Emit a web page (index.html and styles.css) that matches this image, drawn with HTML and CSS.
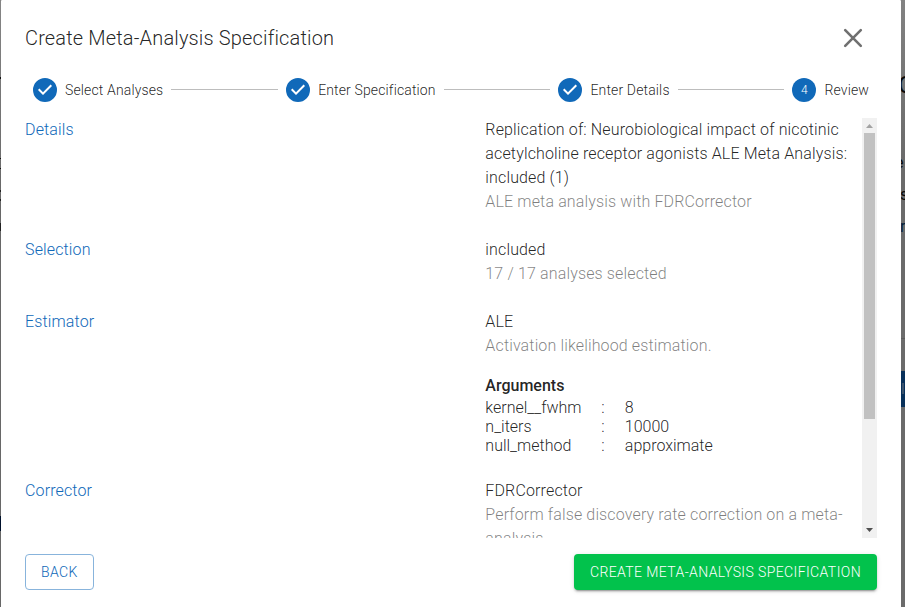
FILE: index.html
```
<!DOCTYPE html>
<html lang="en">
<head>
<meta charset="utf-8">
<title>Create Meta-Analysis Specification</title>
<link rel="stylesheet" href="styles.css">
</head>
<body>
<div class="backdrop" aria-hidden="true">
  <div class="edge-left"></div>
  <div class="edge-right">
    <span class="frag frag-title">C</span>
    <span class="frag frag-e">e</span>
    <span class="frag frag-s">s</span>
    <span class="frag frag-r">r</span>
    <i class="frag-rule"></i>
    <i class="frag-button"></i>
  </div>
</div>
<div class="dialog" role="dialog">
  <header class="dialog-header">
    <h2 class="title">Create Meta-Analysis Specification</h2>
    <svg class="close" viewBox="0 0 20 20"><path d="M2.2 2.2 17.8 17.8M17.8 2.2 2.2 17.8"/></svg>
  </header>
  <div class="stepper">
    <div class="step"><svg class="step-icon" viewBox="0 0 24 24"><path d="M12 0a12 12 0 1 0 0 24 12 12 0 0 0 0-24zm-2 17l-5-5 1.4-1.4 3.6 3.6 7.6-7.6L19 8l-9 9z"/></svg><span>Select Analyses</span></div>
    <div class="connector"></div>
    <div class="step"><svg class="step-icon" viewBox="0 0 24 24"><path d="M12 0a12 12 0 1 0 0 24 12 12 0 0 0 0-24zm-2 17l-5-5 1.4-1.4 3.6 3.6 7.6-7.6L19 8l-9 9z"/></svg><span>Enter Specification</span></div>
    <div class="connector"></div>
    <div class="step"><svg class="step-icon" viewBox="0 0 24 24"><path d="M12 0a12 12 0 1 0 0 24 12 12 0 0 0 0-24zm-2 17l-5-5 1.4-1.4 3.6 3.6 7.6-7.6L19 8l-9 9z"/></svg><span>Enter Details</span></div>
    <div class="connector"></div>
    <div class="step"><span class="step-number">4</span><span>Review</span></div>
  </div>
  <div class="review">
    <div class="review-content">
      <section class="row">
        <div class="label">Details</div>
        <div class="value">
          <p>Replication of: Neurobiological impact of nicotinic acetylcholine receptor agonists ALE Meta Analysis: included (1)</p>
          <p class="muted">ALE meta analysis with FDRCorrector</p>
        </div>
      </section>
      <section class="row">
        <div class="label">Selection</div>
        <div class="value">
          <p>included</p>
          <p class="muted">17 / 17 analyses selected</p>
        </div>
      </section>
      <section class="row">
        <div class="label">Estimator</div>
        <div class="value">
          <p>ALE</p>
          <p class="muted">Activation likelihood estimation.</p>
          <p class="args-title">Arguments</p>
          <div class="args">
            <span>kernel__fwhm</span><span>:</span><span>8</span>
            <span>n_iters</span><span>:</span><span>10000</span>
            <span>null_method</span><span>:</span><span>approximate</span>
          </div>
        </div>
      </section>
      <section class="row">
        <div class="label">Corrector</div>
        <div class="value">
          <p>FDRCorrector</p>
          <p class="muted">Perform false discovery rate correction on a meta-analysis.</p>
        </div>
      </section>
    </div>
    <div class="scrollbar">
      <svg class="arrow arrow-up" viewBox="0 0 15 15"><path d="M4 10 7.5 6 11 10z"/></svg>
      <div class="thumb"></div>
      <svg class="arrow arrow-down" viewBox="0 0 15 15"><path d="M4 5H11L7.5 9z"/></svg>
    </div>
  </div>
  <footer class="actions">
    <button class="btn btn-outlined">BACK</button>
    <button class="btn btn-primary">CREATE META-ANALYSIS SPECIFICATION</button>
  </footer>
</div>
</body>
</html>
```
FILE: styles.css
```
* { box-sizing: border-box; }

body {
  margin: 0;
  height: 607px;
  overflow: hidden;
  background: #707070;
  color: rgba(0, 0, 0, 0.87);
  font-family: Roboto, "Liberation Sans", sans-serif;
  font-size: 16px;
  font-weight: 300;
  line-height: 24px;
  letter-spacing: 0.0088em;
}

p, h2 { margin: 0; }

.backdrop {
  position: absolute;
  inset: 0;
  display: flex;
  justify-content: space-between;
  overflow: hidden;
}

.edge-left {
  width: 1px;
  background:
    linear-gradient(#00112c, #00112c) 0 516px / 1px 15px no-repeat,
    linear-gradient(#111, #111) 0 77px / 1px 2px no-repeat,
    linear-gradient(#111, #111) 0 158px / 1px 1px no-repeat,
    linear-gradient(#111, #111) 0 168px / 1px 1px no-repeat,
    linear-gradient(#222, #222) 0 190px / 1px 2px no-repeat,
    linear-gradient(#222, #222) 0 199px / 1px 2px no-repeat,
    linear-gradient(#222, #222) 0 223px / 1px 8px no-repeat,
    linear-gradient(#858585, #676767 200px);
}

.edge-right {
  position: relative;
  width: 4px;
  overflow: hidden;
  background: linear-gradient(#828282, #6b6b6b 160px);
}

.frag { position: absolute; left: 0; color: #080808; font-weight: 400; }
.frag-title { top: 73px; left: -3px; font-size: 24px; }
.frag-e { top: 151px; left: -6px; }
.frag-s { top: 183px; left: -1px; }
.frag-r { top: 215px; left: -1px; color: #04203c; }
.frag-rule { position: absolute; top: 338px; left: 0; width: 4px; height: 1px; background: #5c5c5c; }
.frag-button { position: absolute; top: 371px; left: 0; width: 4px; height: 36px; background: #08305a; }
.frag-button::after { content: ""; position: absolute; top: 12px; left: 1px; width: 2px; height: 11px; background: #3b536d; }

.dialog {
  position: relative;
  display: flex;
  flex-direction: column;
  width: 900px;
  height: 607px;
  margin-left: 1px;
  padding: 22px 24px 0;
  background: #fff;
  border-radius: 1px 1px 0 0;
}

.dialog-header {
  display: flex;
  align-items: center;
  justify-content: space-between;
  height: 32px;
  padding-right: 14px;
}

.title {
  font-size: 20px;
  font-weight: 300;
  line-height: 32px;
  letter-spacing: 0.0075em;
}

.close { width: 20px; height: 20px; fill: none; stroke: #707070; stroke-width: 2.6; stroke-linecap: round; }

.stepper {
  display: flex;
  align-items: center;
  height: 24px;
  margin-top: 24px;
  font-size: 14px;
  letter-spacing: 0.0098em;
}

.step { display: flex; align-items: center; gap: 8px; padding: 0 8px; white-space: nowrap; }
.step-icon { width: 24px; height: 24px; fill: #1069b9; }

.step-number {
  width: 24px;
  height: 24px;
  border-radius: 50%;
  background: #1069b9;
  color: #fff;
  font-size: 12px;
  text-align: center;
}

.connector { flex: 1; height: 1px; margin-top: -1px; background: #bdbdbd; }

.review { display: flex; height: 420px; margin-top: 16px; overflow: hidden; }
.review-content { flex: 1; min-width: 0; }
.row { display: flex; margin-bottom: 24px; }
.label { flex: 0 0 55%; color: #1069b9; }
.value { flex: 1; min-width: 0; }
.muted { color: rgba(0, 0, 0, 0.5); }
.args-title { margin-top: 16px; font-weight: 500; letter-spacing: 0; }

.args {
  display: grid;
  grid-template-columns: 116px 23.5px 1fr;
  line-height: 19px;
  letter-spacing: 0;
}

.scrollbar { display: flex; flex-direction: column; width: 15px; background: #f1f1f1; }
.arrow { width: 15px; height: 15px; }
.arrow-up { fill: #a3a3a3; }
.arrow-down { margin-top: auto; fill: #505050; }
.thumb { width: 11px; height: 286px; margin-left: 2px; background: #c1c1c1; }

.actions { display: flex; justify-content: space-between; margin-top: 16px; }

.btn {
  height: 36px;
  padding: 0 16px;
  border: 0;
  border-radius: 4px;
  font: 300 14px/24px Roboto, "Liberation Sans", sans-serif;
  letter-spacing: 0.02857em;
}

.btn-outlined { padding: 0 15px; border: 1px solid #88b4dc; background: #fff; color: #1069b9; }

.btn-primary {
  background: #02c24c;
  color: #fff;
  box-shadow: 0 3px 1px -2px rgba(0, 0, 0, 0.2), 0 2px 2px rgba(0, 0, 0, 0.14), 0 1px 5px rgba(0, 0, 0, 0.12);
}
```
